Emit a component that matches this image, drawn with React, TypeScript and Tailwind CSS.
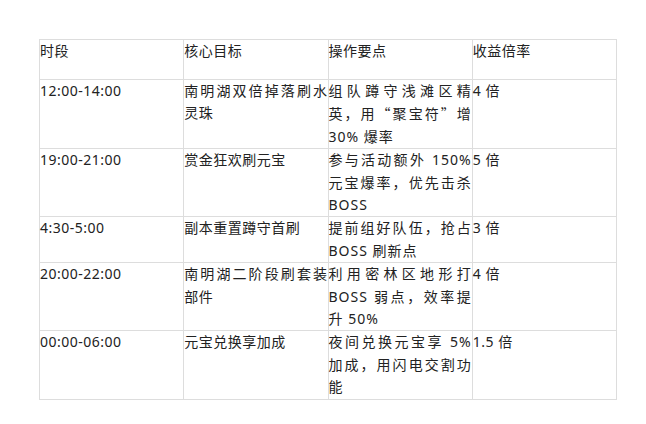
import React from 'react';

const headers = ['时段', '核心目标', '操作要点', '收益倍率'];

const cjk = "font-['Noto_Sans_CJK_SC',sans-serif]";

const rows: React.ReactNode[][] = [
  [
    '12:00-14:00',
    '南明湖双倍掉落刷水灵珠',
    <>
      组队蹲守浅滩区精英，用<span className={cjk}>“聚宝符”</span>增 30% 爆率
    </>,
    '4 倍',
  ],
  ['19:00-21:00', '赏金狂欢刷元宝', '参与活动额外 150% 元宝爆率，优先击杀 BOSS', '5 倍'],
  ['4:30-5:00', '副本重置蹲守首刷', '提前组好队伍，抢占 BOSS 刷新点', '3 倍'],
  ['20:00-22:00', '南明湖二阶段刷套装部件', '利用密林区地形打 BOSS 弱点，效率提升 50%', '4 倍'],
  ['00:00-06:00', '元宝兑换享加成', '夜间兑换元宝享 5% 加成，用闪电交割功能', '1.5 倍'],
];

export default function App() {
  return (
    <div className="min-h-screen bg-white pt-[39px] pl-[39px] font-['Noto_Sans','Noto_Sans_CJK_SC',sans-serif] text-[14px] leading-[22.4px] tracking-[0.5px] text-[#222]">
      <table className="w-[578px] table-fixed border-collapse">
        <thead>
          <tr className="h-[40px]">
            {headers.map((h) => (
              <th
                key={h}
                className="border border-[#dddddd] p-0 text-left align-top font-normal"
              >
                {h}
              </th>
            ))}
          </tr>
        </thead>
        <tbody>
          {rows.map((row, r) => (
            <tr key={r}>
              {row.map((cell, i) => (
                <td
                  key={i}
                  className={
                    i === 2
                      ? 'border border-[#dddddd] p-0 text-justify align-top tracking-[1px]'
                      : 'border border-[#dddddd] p-0 text-justify align-top'
                  }
                >
                  {cell}
                </td>
              ))}
            </tr>
          ))}
        </tbody>
      </table>
    </div>
  );
}
